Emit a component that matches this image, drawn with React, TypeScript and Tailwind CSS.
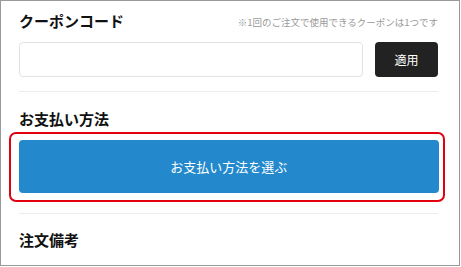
import React from "react"

const font = { fontFamily: '"Noto Sans CJK JP", "Noto Sans", sans-serif' }

const App = () => {
    return (
        <div
            className="w-[460px] h-[266px] border border-[#9a9a9a] bg-white overflow-hidden"
            style={font}
        >
            <div className="pl-[18px] pr-[21px] pt-[9px]">
                <div className="flex items-center justify-between h-[21px]">
                    <h2 className="text-[15px] leading-[21px] font-bold text-[#111]">
                        クーポンコード
                    </h2>
                    <p className="text-[9.5px] leading-[14px] text-[#9a9a9a] mt-[3px]">
                        ※1回のご注文で使用できるクーポンは1つです
                    </p>
                </div>
                <div className="flex items-center gap-[12px] mt-[11px]">
                    <input
                        type="text"
                        className="flex-1 h-[35px] border border-[#e2e2e2] rounded-[4px] bg-white outline-none"
                    />
                    <button className="w-[63px] h-[35px] rounded-[4px] bg-[#222222] text-white text-[12px]">
                        適用
                    </button>
                </div>
                <div className="mt-[14px] h-px bg-[#ececec]" />
                <h2 className="mt-[17px] text-[15px] leading-[20px] font-bold text-[#111]">
                    お支払い方法
                </h2>
                <div className="mt-[3px] -ml-[10px] -mr-[7px] border-[2.5px] border-[#e00010] rounded-[7px] pt-[6px] pb-[7px] pl-[7.5px] pr-[4px]">
                    <button className="w-full h-[53px] rounded-[4px] bg-[#2389cc] text-white text-[13px]">
                        お支払い方法を選ぶ
                    </button>
                </div>
                <div className="mt-[11px] h-px bg-[#ececec]" />
                <h2 className="mt-[16px] text-[15px] leading-[20px] font-bold text-[#111]">
                    注文備考
                </h2>
            </div>
        </div>
    )
}

export default App
